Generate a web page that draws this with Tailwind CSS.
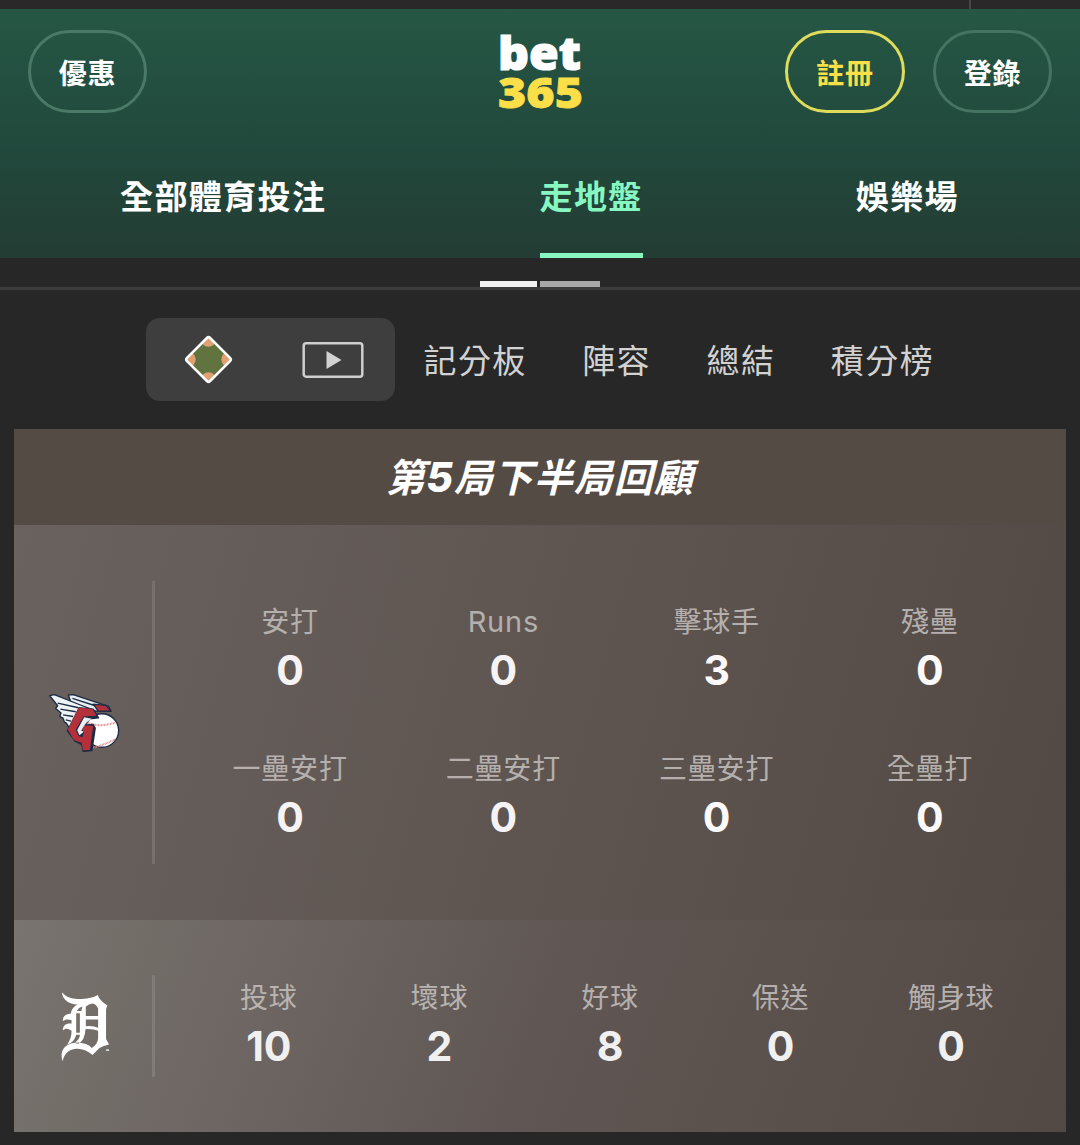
<!DOCTYPE html>
<html lang="zh-Hant">

<head>
    <meta charset="UTF-8">
    <meta name="viewport" content="width=device-width, initial-scale=1.0">
    <title>bet365 - 走地盤</title>
    <script src="https://cdn.jsdelivr.net/npm/@tailwindcss/browser@4"></script>
</head>

<body class="h-[1145px] overflow-hidden bg-[#272727] font-['Inter','Noto_Sans_CJK_TC',sans-serif] text-white">

    <!-- Bottom edge of the browser bar -->
    <div class="flex h-[9px] justify-end bg-[#2a2829] pr-[109px]">
        <div class="w-0.5 bg-[#484647]"></div>
    </div>

    <!-- Header -->
    <header class="h-[249px] bg-linear-to-b from-[#265745] via-[#214a3d] to-[#233c34]">
        <div class="grid h-[125px] grid-cols-3 items-center px-7">
            <button class="h-[83px] w-[119px] rounded-full border-3 border-[#4a7967] pt-[5px] text-[28px] font-bold tracking-[0.8px]">優惠</button>
            <svg class="h-20 w-[90px] justify-self-center overflow-visible" viewBox="0 0 90 80">
                <text x="3" y="37.500" textLength="83" lengthAdjust="spacingAndGlyphs" class="fill-white stroke-white stroke-[1.2] font-['Open_Sans'] text-[46px] font-extrabold">bet</text>
                <text x="3" y="75.500" textLength="85" lengthAdjust="spacingAndGlyphs" class="fill-[#fbdf49] stroke-[#fbdf49] stroke-[0.8] font-['Open_Sans'] text-[43px] font-extrabold">365</text>
            </svg>
            <div class="flex justify-end gap-7">
                <button class="h-[83px] w-[120px] rounded-full border-3 border-[#dfdb5b] pt-[5px] text-[28px] font-bold tracking-[0.8px] text-[#fbdf49]">註冊</button>
                <button class="h-[83px] w-[119px] rounded-full border-3 border-[#457462] pt-[5px] text-[28px] font-bold tracking-[0.8px]">登錄</button>
            </div>
        </div>
        <nav class="flex h-[124px] justify-between pr-[121px] pl-[120px] text-[33px] font-bold tracking-[1.4px]">
            <a href="#" class="pt-[39px]">全部體育投注</a>
            <a href="#" class="border-b-[5px] border-[#87f6c1] pt-[39px] text-[#87f6c1]">走地盤</a>
            <a href="#" class="pt-[39px]">娛樂場</a>
        </nav>
    </header>

    <!-- Pager -->
    <div class="flex h-8 items-end justify-center gap-[3px] border-b-[3px] border-[#3b3b3b]">
        <div class="h-1.5 w-[57px] bg-[#f2f2f2]"></div>
        <div class="h-1.5 w-[60px] bg-[#a8a8a8]"></div>
    </div>

    <!-- Match tabs -->
    <nav class="flex h-[139px] items-center gap-[55.5px] pl-[146px] text-[33px] tracking-[1.4px] text-[#d2d2d2]">
        <div class="-mr-[27px] flex h-[83px] w-[249px] items-center rounded-[14px] bg-[#3e3e3e] pl-[37.500px]">
            <svg class="size-[49px]" viewBox="0 0 48 48">
                <clipPath id="field"><rect x="8" y="8" width="32" height="32" rx="2" transform="rotate(45 24 24)" /></clipPath>
                <g clip-path="url(#field)">
                    <rect width="48" height="48" fill="#61743f" />
                    <g fill="#e0a072">
                        <circle cx="24" cy="4" r="7.5" />
                        <circle cx="44" cy="24" r="7.5" />
                        <circle cx="24" cy="44" r="7.5" />
                        <circle cx="4" cy="24" r="7.5" />
                    </g>
                </g>
                <rect x="8" y="8" width="32" height="32" rx="2.2" transform="rotate(45 24 24)" fill="none" stroke="#fff" stroke-width="2.5" />
            </svg>
            <svg class="ml-[69px] h-9 w-[62px]" viewBox="0 0 62 36">
                <rect x="1.7" y="1.3" width="58.6" height="33.4" rx="2.5" fill="none" stroke="#cfcfcf" stroke-width="2.5" />
                <path d="M24.5 9v18L39.500 18z" fill="#d2d2d2" />
            </svg>
        </div>
        <a href="#" class="pt-1">記分板</a>
        <a href="#" class="pt-1">陣容</a>
        <a href="#" class="pt-1">總結</a>
        <a href="#" class="pt-1">積分榜</a>
    </nav>

    <!-- Inning review -->
    <main class="mx-3.5">
        <h1 class="flex h-24 items-center justify-center bg-[#554b45] pt-0.5 text-[39px] font-bold italic tracking-[1px]">第<span class="text-[41px] font-extrabold">5</span>局下半局回顧</h1>

        <section class="flex h-[395px] bg-linear-105 from-[#6a625f] to-[#534944] pr-[29.5px]">
            <div class="flex w-[138px] items-center pl-[34px]">
                <svg class="h-[62px] w-[72px]" viewBox="55 65 215 185">
                    <g stroke="#1b2c44" stroke-width="4" stroke-linejoin="round">
                        <path d="M116 74L130 73L236 108L243 122L200 122L140 108L122 92Z" fill="#e9eff4" />
                        <path d="M190 101L228 105L243 122L205 122Z" fill="#b4303a" />
                        <path d="M60 76L74 73L150 103L190 118L118 172L110 158L104 155L100 143L90 138L94 128L78 114L84 106Z" fill="#eef3f6" />
                        <path d="M84 98L146 112M92 116L138 124M100 133L130 138M108 148L124 152M128 84L196 106" fill="none" />
                        <circle cx="216" cy="180" r="50" fill="#fff" />
                    </g>
                    <g fill="none" stroke="#d9868a" stroke-width="6" stroke-dasharray="2.500 2">
                        <path d="M170 155Q210 173 258 155" />
                        <path d="M190 231Q225 222 256 206" />
                    </g>
                    <path d="M148 112L190 116L206 142L180 145L164 149L150 177L163 164L190 162L196 173L186 240L160 242L156 222L136 212L113 181Z" fill="#1b2c44" stroke="#1b2c44" stroke-width="4" stroke-linejoin="round" />
                    <path d="M147 111L188 116L200 136L161 138L138 178L146 196L158 200L163 184L156 178L164 165L190 166L180 238L159 239L156 217L132 208L114 177Z" fill="#b4303a" />
                    <path d="M163 140L142 179L149 194L162 184L154 180L170 155L186 145Z" fill="#e9eff4" />
                </svg>
            </div>
            <div class="my-14 w-[3px] bg-[#77706d]"></div>
            <dl class="ml-[28.500px] grid flex-1 grid-cols-4 content-start gap-y-[49px] pt-[77px] text-center">
                <div>
                    <dt class="h-10 text-[28px] leading-10 tracking-[0.8px] text-[#b5b0ad]">安打</dt>
                    <dd class="h-[58px] text-[41px] leading-[56px] font-bold text-[#f5f3f3]">0</dd>
                </div>
                <div>
                    <dt class="h-10 text-[29px] leading-[39px] tracking-[0.8px] text-[#b5b0ad]">Runs</dt>
                    <dd class="h-[58px] text-[41px] leading-[56px] font-bold text-[#f5f3f3]">0</dd>
                </div>
                <div>
                    <dt class="h-10 text-[28px] leading-10 tracking-[0.8px] text-[#b5b0ad]">擊球手</dt>
                    <dd class="h-[58px] text-[41px] leading-[56px] font-bold text-[#fbf9f9]">3</dd>
                </div>
                <div>
                    <dt class="h-10 text-[28px] leading-10 tracking-[0.8px] text-[#b5b0ad]">殘壘</dt>
                    <dd class="h-[58px] text-[41px] leading-[56px] font-bold text-[#fbf9f9]">0</dd>
                </div>
                <div>
                    <dt class="h-10 text-[28px] leading-10 tracking-[0.8px] text-[#b5b0ad]">一壘安打</dt>
                    <dd class="h-[58px] text-[41px] leading-[56px] font-bold text-[#f5f3f3]">0</dd>
                </div>
                <div>
                    <dt class="h-10 text-[28px] leading-10 tracking-[0.8px] text-[#b5b0ad]">二壘安打</dt>
                    <dd class="h-[58px] text-[41px] leading-[56px] font-bold text-[#f5f3f3]">0</dd>
                </div>
                <div>
                    <dt class="h-10 text-[28px] leading-10 tracking-[0.8px] text-[#b5b0ad]">三壘安打</dt>
                    <dd class="h-[58px] text-[41px] leading-[56px] font-bold text-[#fbf9f9]">0</dd>
                </div>
                <div>
                    <dt class="h-10 text-[28px] leading-10 tracking-[0.8px] text-[#b5b0ad]">全壘打</dt>
                    <dd class="h-[58px] text-[41px] leading-[56px] font-bold text-[#fbf9f9]">0</dd>
                </div>
            </dl>
        </section>

        <section class="flex h-[212px] bg-linear-110 from-[#79746f] via-[#605754] to-[#534944] pr-[29.5px]">
            <div class="flex w-[138px] items-center pl-[46px]">
                <svg class="h-[73px] w-[52px]" viewBox="90 55 155 220" fill="#fff">
                    <path fill-rule="evenodd" d="M95 62C107 77 126 83 146 82C170 82 187 79 203 70Q208 86 232 102L228 112V203L237 219Q220 222 208 230L187 251C171 237 156 231 137 232C115 234 102 247 97 270C88 244 99 221 128 215Q145 210 167 218Q180 222 185 230Q203 217 204 202V111Q198 98 187 96Q176 97 167 105V133H204V144H167V164Q190 162 204 169V178Q190 172 166 173Q164 207 144 217L133 215Q149 203 149 190H138Q132 214 111 219Q124 202 124 178C113 170 105 170 98 177C97 161 108 154 124 156V146C112 142 104 143 98 149C96 134 108 127 122 126C124 112 133 103 143 99C118 100 96 84 95 62ZM138 125V184H149V125ZM140 118H153L157 105Q145 108 140 118Z" />
                    <path d="M228 234h9v4h-9z" />
                </svg>
            </div>
            <div class="mt-[55px] h-[102px] w-[3px] bg-[#827c78]"></div>
            <dl class="ml-[28.500px] grid flex-1 grid-cols-5 content-start pt-[58px] text-center">
                <div>
                    <dt class="h-10 text-[28px] leading-10 tracking-[0.8px] text-[#b8b3b0]">投球</dt>
                    <dd class="h-[58px] text-[41px] leading-[56px] font-bold text-[#f1f0f1]">10</dd>
                </div>
                <div>
                    <dt class="h-10 text-[28px] leading-10 tracking-[0.8px] text-[#b8b3b0]">壞球</dt>
                    <dd class="h-[58px] text-[41px] leading-[56px] font-bold text-[#f1f0f1]">2</dd>
                </div>
                <div>
                    <dt class="h-10 text-[28px] leading-10 tracking-[0.8px] text-[#b5b0ad]">好球</dt>
                    <dd class="h-[58px] text-[41px] leading-[56px] font-bold text-[#f1f0f1]">8</dd>
                </div>
                <div>
                    <dt class="h-10 text-[28px] leading-10 tracking-[0.8px] text-[#b5b0ad]">保送</dt>
                    <dd class="h-[58px] text-[41px] leading-[56px] font-bold text-[#f1f0f1]">0</dd>
                </div>
                <div>
                    <dt class="h-10 text-[28px] leading-10 tracking-[0.8px] text-[#b5b0ad]">觸身球</dt>
                    <dd class="h-[58px] text-[41px] leading-[56px] font-bold text-[#f1f0f1]">0</dd>
                </div>
            </dl>
        </section>
    </main>

</body>

</html>
